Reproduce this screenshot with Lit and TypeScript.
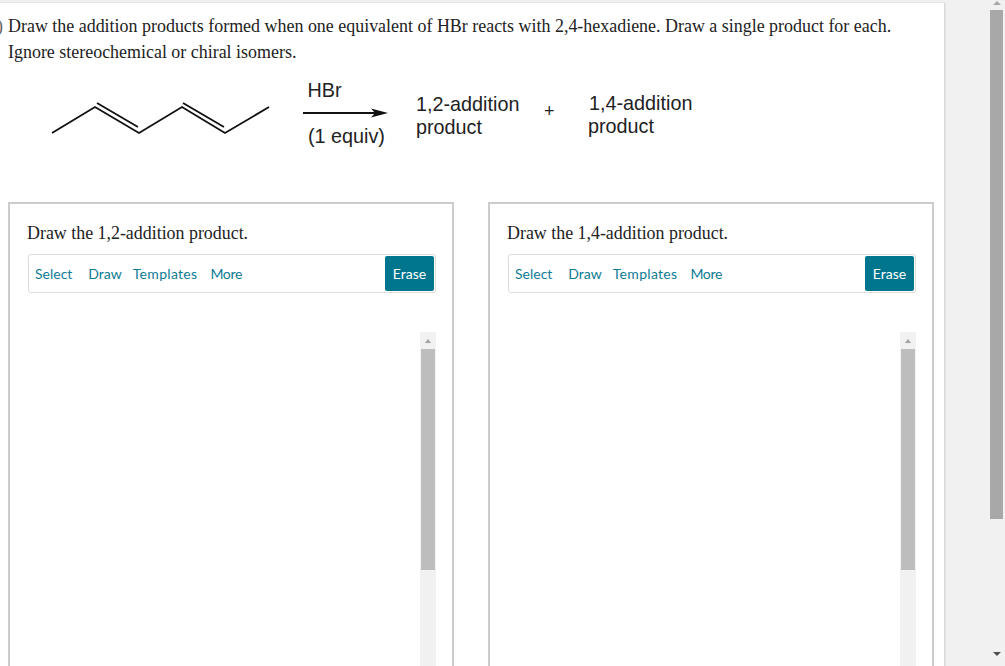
import { css, html, LitElement } from "lit";
import { customElement, property } from "lit/decorators.js";

@customElement("draw-panel")
export class DrawPanel extends LitElement {
  @property({ type: String }) label = "";

  render() {
    return html`
      <div class="panel">
        <div class="title">${this.label}</div>
        <div class="toolbar">
          <span class="tool select">Select</span>
          <span class="tool draw">Draw</span>
          <span class="tool templates">Templates</span>
          <span class="tool more">More</span>
          <button class="erase">Erase</button>
        </div>
        <div class="canvas">
          <div class="scroll">
            <div class="arrow"></div>
            <div class="thumb"></div>
          </div>
        </div>
      </div>
    `;
  }

  static styles = css`
    :host {
      display: block;
      flex: 0 0 446px;
    }

    .panel {
      box-sizing: border-box;
      height: 520px;
      border: 2px solid #cccccc;
      padding: 17px 16px 0 18px;
      background: #fff;
    }

    .title {
      margin-left: -1px;
      font-family: "Liberation Serif", serif;
      font-size: 17.9px;
      line-height: 25px;
      color: #222;
    }

    .toolbar {
      display: flex;
      align-items: center;
      box-sizing: border-box;
      height: 39px;
      margin-top: 8px;
      padding: 0 1px 0 6px;
      border: 1px solid #dddddd;
      border-radius: 3px;
      font-family: Lato, sans-serif;
      font-size: 14px;
      color: #0e7c96;
    }

    .select {
      margin-right: 16px;
    }

    .draw {
      margin-right: 11px;
    }

    .templates {
      margin-right: 13px;
      letter-spacing: 0.3px;
    }

    .more {
      letter-spacing: -0.3px;
    }

    .erase {
      margin-left: auto;
      width: 49px;
      height: 35px;
      padding: 0;
      border: none;
      border-radius: 2px;
      background: #00758e;
      color: #fff;
      font: inherit;
    }

    .canvas {
      display: flex;
      justify-content: flex-end;
      margin-top: 39px;
    }

    .scroll {
      box-sizing: border-box;
      width: 16px;
      height: 400px;
      padding: 0 1px;
      background: #f1f1f1;
    }

    .arrow {
      width: 0;
      height: 0;
      margin: 7px auto 6px;
      border-left: 3.5px solid transparent;
      border-right: 3.5px solid transparent;
      border-bottom: 4px solid #a3a3a3;
    }

    .thumb {
      height: 221px;
      background: #bdbdbd;
    }
  `;
}

@customElement("app-root")
export class AppRoot extends LitElement {
  render() {
    return html`
      <div class="page">
        <div class="card">
          <div class="question">
            <span class="marker">)</span>
            <p>
              Draw the addition products formed when one equivalent of HBr reacts
              with 2,4-hexadiene. Draw a single product for each.<br />
              Ignore stereochemical or chiral isomers.
            </p>
          </div>
          <svg class="scheme" width="944" height="120" viewBox="0 68 944 120">
            <g fill="none" stroke="#111" stroke-width="1.8">
              <path d="M52 133L95 107L139 133L182 107L225 133L269 107" />
              <path d="M97 103L138 127M183 103L224 127" />
              <path d="M303 113H376" />
            </g>
            <path d="M388 113L371 108.5L375 113L371 117.5Z" fill="#111" />
            <g class="label">
              <text x="307.5" y="97">HBr</text>
              <text x="308" y="143">(1 equiv)</text>
              <text x="416" y="111">1,2-addition</text>
              <text x="416" y="134">product</text>
              <text x="544" y="117" class="plus">+</text>
              <text x="589" y="110">1,4-addition</text>
              <text x="588" y="133">product</text>
            </g>
          </svg>
          <div class="panels">
            <draw-panel label="Draw the 1,2-addition product."></draw-panel>
            <draw-panel label="Draw the 1,4-addition product."></draw-panel>
          </div>
        </div>
        <div class="pagebar">
          <div class="up"></div>
          <div class="pagethumb"></div>
          <div class="down"></div>
        </div>
      </div>
    `;
  }

  static styles = css`
    :host {
      display: block;
    }

    .page {
      display: flex;
      justify-content: space-between;
      box-sizing: border-box;
      width: 1005px;
      height: 666px;
      padding-top: 3px;
      overflow: hidden;
      background: #f1f1f1;
    }

    .card {
      flex: 0 0 944px;
      height: 700px;
      background: #fff;
      box-shadow: 1px 0 2px rgba(0, 0, 0, 0.15);
    }

    .question {
      display: flex;
      height: 65px;
      padding-top: 10px;
      box-sizing: border-box;
      font-family: "Liberation Serif", serif;
      font-size: 17.95px;
      line-height: 26px;
      color: #222;
    }

    .marker {
      display: flex;
      justify-content: flex-end;
      flex: 0 0 3px;
      overflow: hidden;
      margin-right: 5px;
      color: #666;
    }

    .question p {
      margin: 0;
    }

    .scheme {
      display: block;
    }

    .label {
      font-family: "Liberation Sans", sans-serif;
      font-size: 19.8px;
      fill: #222;
    }

    .plus {
      font-size: 18px;
    }

    .panels {
      display: flex;
      gap: 34px;
      margin-top: 14px;
      padding-left: 8px;
    }

    .pagebar {
      display: flex;
      flex-direction: column;
      align-items: center;
      flex: 0 0 13px;
      margin-top: -3px;
      margin-right: 2px;
    }

    .up {
      width: 0;
      height: 0;
      margin-top: 1px;
      border-left: 4px solid transparent;
      border-right: 4px solid transparent;
      border-bottom: 4px solid #a8a8a8;
    }

    .pagethumb {
      align-self: stretch;
      height: 509px;
      margin-top: 5px;
      background: #a8a8a8;
    }

    .down {
      width: 0;
      height: 0;
      margin-top: 133px;
      border-left: 4px solid transparent;
      border-right: 4px solid transparent;
      border-top: 4px solid #505050;
    }
  `;
}
